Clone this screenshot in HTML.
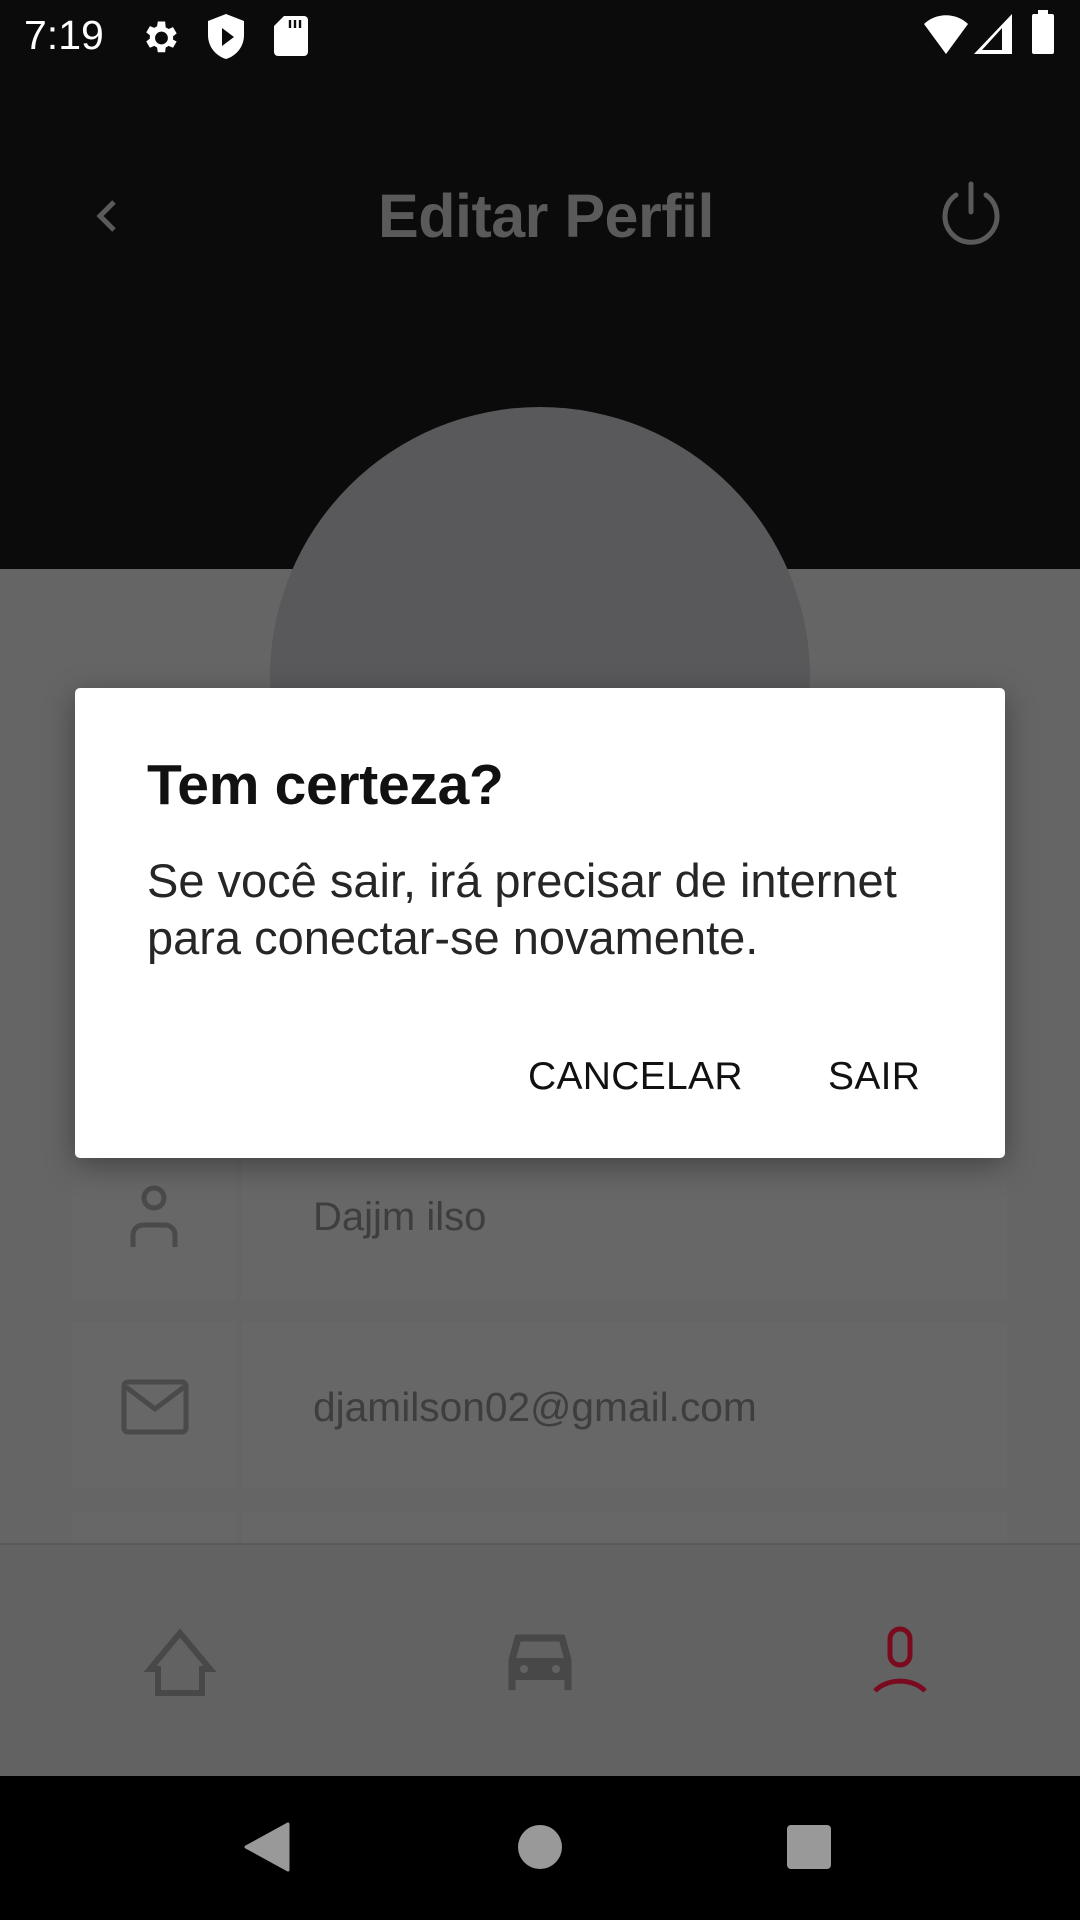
<!DOCTYPE html>
<html><head><meta charset="utf-8"><style>
*{margin:0;padding:0;box-sizing:border-box}
body{width:1080px;height:1920px;position:relative;overflow:hidden;background:#656565;font-family:"Liberation Sans",sans-serif}
.abs{position:absolute}
</style></head><body>
<div class="abs" style="left:0;top:0;width:1080px;height:569px;background:#0b0b0b"></div>
<div class="abs" style="left:24px;top:12px;color:#fff;font-size:41px">7:19</div>
<svg class="abs" style="left:138px;top:16px" width="44" height="44" viewBox="0 0 24 24"><path fill="#fff" d="M19.1 12.9a7 7 0 000-1.8l2-1.6-2-3.4-2.4 1a7 7 0 00-1.6-.9L14.8 3h-4l-.4 2.6a7 7 0 00-1.5.9l-2.4-1-2 3.4 2 1.6a7 7 0 000 1.8l-2 1.6 2 3.4 2.4-1a7 7 0 001.5.9l.4 2.6h4l.3-2.6a7 7 0 001.6-.9l2.4 1 2-3.4zM12.8 15.5a3.5 3.5 0 110-7 3.5 3.5 0 010 7z"/></svg>
<svg class="abs" style="left:206px;top:14px" width="40" height="46" viewBox="0 0 20 23"><path fill="#fff" d="M10 0L1 3.5v7c0 6 4 10.5 9 12 5-1.5 9-6 9-12v-7z"/><path fill="#0b0b0b" d="M8 7v9l6-4.5z"/></svg>
<svg class="abs" style="left:274px;top:16px" width="34" height="40" viewBox="0 0 17 20"><path fill="#fff" d="M5 0h10a2 2 0 012 2v16a2 2 0 01-2 2H2a2 2 0 01-2-2V5z"/><path stroke="#0b0b0b" stroke-width="1.2" d="M8 2v4M10.5 2v4M13 2v4"/></svg>
<svg class="abs" style="left:924px;top:14px" width="44" height="40" viewBox="0 0 22 20"><path fill="#fff" d="M0 5a16 16 0 0122 0L11 20z"/></svg>
<svg class="abs" style="left:974px;top:14px" width="38" height="40" viewBox="0 0 19 20"><path fill="#fff" d="M19 0v20H0z"/><path fill="#0b0b0b" d="M14 7v11H4z"/><path fill="#fff" d="M15 8h2v10h-2z"/></svg>
<div class="abs" style="left:1032px;top:14px;width:22px;height:40px;background:#fff;border-radius:2px"></div>
<div class="abs" style="left:1038px;top:10px;width:10px;height:6px;background:#fff"></div>
<svg class="abs" style="left:92px;top:196px" width="32" height="40" viewBox="0 0 16 20"><path d="M11 3L4 10l7 7" stroke="#5a5a5a" stroke-width="2.5" fill="none"/></svg>
<div class="abs" style="left:0;width:1092px;top:181px;text-align:center;color:#5a5a5a;font-size:61px;font-weight:bold;letter-spacing:-0.5px">Editar Perfil</div>
<svg class="abs" style="left:936px;top:180px" width="70" height="70" viewBox="0 0 70 70"><path d="M35 4v28M20 15a26 26 0 1030 0" stroke="#5a5a5a" stroke-width="5" fill="none" stroke-linecap="round"/></svg>
<div class="abs" style="left:270px;top:407px;width:540px;height:540px;border-radius:50%;background:#59595b"></div>
<div class="abs" style="left:72px;top:1151px;width:164px;height:149px;background:#676767"></div>
<div class="abs" style="left:242px;top:1151px;width:765px;height:149px;background:#676767"></div>
<div class="abs" style="left:72px;top:1322px;width:164px;height:167px;background:#676767"></div>
<div class="abs" style="left:242px;top:1322px;width:765px;height:167px;background:#676767"></div>
<div class="abs" style="left:72px;top:1511px;width:164px;height:40px;background:#676767"></div>
<div class="abs" style="left:242px;top:1511px;width:765px;height:40px;background:#676767"></div>
<svg class="abs" style="left:126px;top:1185px" width="56" height="64" viewBox="0 0 56 64"><ellipse cx="28" cy="13" rx="10" ry="10" stroke="#4a4a4a" stroke-width="5" fill="none"/><path d="M7 62V50a10 10 0 0110-10h22a10 10 0 0110 10v12" stroke="#4a4a4a" stroke-width="5" fill="none"/></svg>
<div class="abs" style="left:313px;top:1195px;font-size:40px;color:#3e3e3e">Dajjm ilso</div>
<svg class="abs" style="left:121px;top:1379px" width="68" height="56" viewBox="0 0 68 56"><rect x="3" y="3" width="62" height="50" rx="4" stroke="#4a4a4a" stroke-width="5" fill="none"/><path d="M5 8l29 22 29-22" stroke="#4a4a4a" stroke-width="5" fill="none"/></svg>
<div class="abs" style="left:313px;top:1384px;font-size:40.7px;color:#3e3e3e">djamilson02@gmail.com</div>
<div class="abs" style="left:0;top:1543px;width:1080px;height:233px;background:#626262;border-top:2px solid #5a5a5a"></div>
<svg class="abs" style="left:144px;top:1625px" width="72" height="72" viewBox="0 0 72 72"><path d="M6 44L36 8l30 36H58v24H14V44z" stroke="#484848" stroke-width="6" fill="none"/></svg>
<svg class="abs" style="left:508px;top:1630px" width="64" height="60" viewBox="0 0 64 60"><path d="M4 60V30l6-22h44l6 22v30" stroke="#484848" stroke-width="7" fill="none"/><rect x="4" y="28" width="56" height="22" fill="#484848"/><circle cx="16" cy="39" r="4" fill="#626262"/><circle cx="48" cy="39" r="4" fill="#626262"/></svg>
<svg class="abs" style="left:870px;top:1625px" width="60" height="72" viewBox="0 0 60 72"><rect x="20" y="4" width="20" height="36" rx="10" stroke="#7a0b1f" stroke-width="5" fill="none"/><path d="M5 66a30 22 0 0150 0" stroke="#7a0b1f" stroke-width="5" fill="none"/></svg>
<div class="abs" style="left:0;top:1776px;width:1080px;height:144px;background:#000"></div>
<svg class="abs" style="left:244px;top:1822px" width="46" height="50" viewBox="0 0 46 50"><path d="M44 2v46L2 25z" fill="#999" stroke="#999" stroke-width="3" stroke-linejoin="round"/></svg>
<div class="abs" style="left:518px;top:1825px;width:44px;height:44px;border-radius:50%;background:#999"></div>
<div class="abs" style="left:787px;top:1825px;width:44px;height:44px;border-radius:4px;background:#999"></div>
<div class="abs" style="left:75px;top:688px;width:930px;height:470px;background:#fff;border-radius:5px;box-shadow:0 8px 30px rgba(0,0,0,.35)"></div>
<div class="abs" style="left:147px;top:752px;font-size:57px;font-weight:bold;color:#111;letter-spacing:-0.3px">Tem certeza?</div>
<div class="abs" style="left:147px;top:852px;font-size:47px;line-height:57px;color:#262626">Se você sair, irá precisar de internet<br>para conectar-se novamente.</div>
<div class="abs" style="left:528px;top:1055px;font-size:39px;color:#111;letter-spacing:0.3px">CANCELAR</div>
<div class="abs" style="left:828px;top:1055px;font-size:39px;color:#111;letter-spacing:0.3px">SAIR</div>
</body></html>
